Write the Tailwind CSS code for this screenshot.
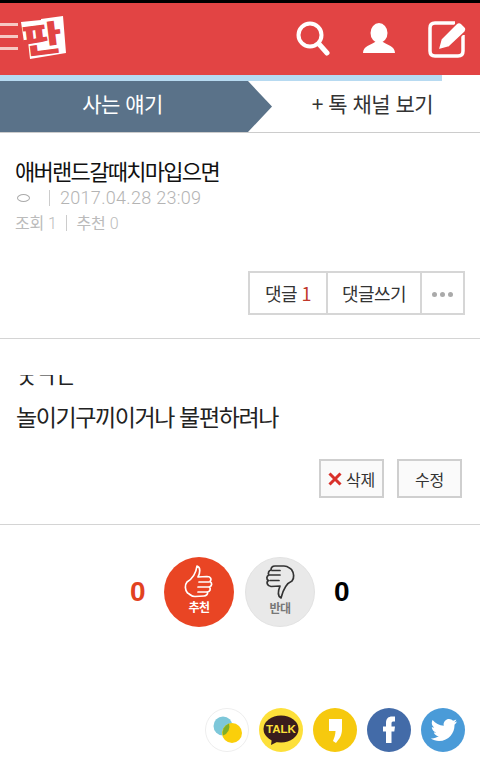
<!DOCTYPE html>
<html lang="ko"><head><meta charset="utf-8">
<script src="https://cdn.jsdelivr.net/npm/@tailwindcss/browser@4"></script>
</head>
<body class="bg-white font-['Noto_Sans_CJK_KR','Noto_Sans',sans-serif]">
<div class="w-[480px] h-[765px] overflow-hidden flex flex-col">
  <div class="h-[3px] bg-black"></div>
  <header class="h-[72px] bg-[#e24444] flex items-center relative">
    <div class="w-[18px] flex flex-col gap-[9px] -mt-[5px]">
      <div class="h-[3px] bg-[#f6c9c4]"></div><div class="h-[3px] bg-[#f6c9c4]"></div><div class="h-[3px] bg-[#f6c9c4]"></div>
    </div>
    <svg class="w-[48px] h-[48px] -mt-[1px]" viewBox="0 0 48 48">
      <polygon points="3,7 23,5 23,22 6,27" fill="#fff"/>
      <polygon points="23,4 45,1 48,38 12,44 10,26 23,22" fill="#fff"/>
      <text x="4" y="37" font-size="35" font-weight="900" fill="#e24444" font-family="Noto Sans CJK KR" transform="rotate(-7 24 24)" textLength="40" lengthAdjust="spacingAndGlyphs">판</text>
    </svg>
    <div class="ml-auto flex items-center gap-[32px] pr-[14px]">
      <svg class="w-[34px] h-[36px]" viewBox="0 0 34 36"><circle cx="14" cy="14" r="11.5" fill="none" stroke="#fff" stroke-width="4"/><path d="M23 23 L31 32" stroke="#fff" stroke-width="5" stroke-linecap="round"/></svg>
      <svg class="w-[34px] h-[34px]" viewBox="0 0 34 34"><ellipse cx="17" cy="11" rx="8.5" ry="10" fill="#fff"/><path d="M1 31 C1 24 9 23 13 20 H21 C25 23 33 24 33 31 Z" fill="#fff"/></svg>
      <svg class="w-[38px] h-[38px]" viewBox="0 0 38 38"><path d="M27 3 H7 Q2 3 2 8 V31 Q2 36 7 36 H30 Q35 36 35 31 V15" fill="none" stroke="#fff" stroke-width="3.5"/><path d="M13 19 L28 4 Q31 1 34 4 L37 7 Q39 9 37 12 L21 27 L10 30 Z" fill="#fff" stroke="#e24444" stroke-width="1.5"/></svg>
    </div>
  </header>
  <div class="h-[6px] w-[442px] bg-[#b7daf1]"></div>
  <nav class="h-[51px] flex">
    <div class="w-[272px] h-full bg-[#5a7289] [clip-path:polygon(0_0,248px_0,272px_50%,248px_100%,0_100%)] flex items-center justify-center pr-[27px] pb-[6px] text-white text-[21px] tracking-[-0.5px]">사는 얘기</div>
    <div class="flex-1 flex items-center justify-center text-[#333] text-[21px] tracking-[-0.5px] pr-[7px] pb-[6px]">+ 톡 채널 보기</div>
  </nav>
  <div class="h-px bg-[#ccc]"></div>

  <section class="h-[206px] flex flex-col border-b border-[#d4d4d4] px-[15px]">
    <h1 class="mt-[20px] text-[22px] leading-[34px] font-normal tracking-[-1.7px] text-[#111]">애버랜드갈때치마입으면</h1>
    <div class="flex items-center text-[18px] leading-[24px] text-[#b4b4b4] -mt-[1px]">
      <span class="w-[13px] h-[8px] ml-[2px] rounded-[50%] border border-[#aaa]"></span>
      <span class="w-px h-[16px] bg-[#ccc] ml-[19px] mr-[10px]"></span>
      <span class="font-['Roboto'] font-light tracking-[0.3px]">2017.04.28 23:09</span>
    </div>
    <div class="flex items-center text-[16px] leading-[24px] text-[#bbb] tracking-[-0.3px]">
      <span>조회 <span class="font-['Roboto'] font-light">1</span></span><span class="w-px h-[16px] bg-[#ccc] ml-[9px] mr-[10px]"></span><span>추천 <span class="font-['Roboto'] font-light">0</span></span>
    </div>
    <div class="mt-auto mb-[23px] self-end flex h-[44px] border-2 border-[#d6d6d6] text-[#333] text-[18px] tracking-[-0.5px] w-[217px]">
      <div class="w-[78px] flex items-center justify-center border-r-2 border-[#d6d6d6]">댓글&nbsp;<span class="text-[#c0392b]">1</span></div>
      <div class="w-[94px] flex items-center justify-center border-r-2 border-[#d6d6d6]">댓글쓰기</div>
      <div class="flex-1 flex items-center justify-center gap-[3px] pt-[2px]">
        <span class="w-[5px] h-[5px] rounded-full bg-[#aaa]"></span><span class="w-[5px] h-[5px] rounded-full bg-[#aaa]"></span><span class="w-[5px] h-[5px] rounded-full bg-[#aaa]"></span>
      </div>
    </div>
  </section>

  <section class="h-[186px] flex flex-col border-b border-[#d4d4d4] px-[16px] text-[#222]">
    <div class="mt-[36px] h-[12px] overflow-hidden relative">
      <span class="absolute left-0 bottom-[-7px] text-[23px] leading-[32px] tracking-[-1.4px] whitespace-nowrap">ㅈㄱㄴ</span>
    </div>
    <p class="mt-[13px] text-[23px] leading-[32px] tracking-[-1.4px] whitespace-nowrap">놀이기구끼이거나 불편하려나</p>
    <div class="mt-auto mb-[26px] mr-[2px] self-end flex gap-[13px] text-[16px] tracking-[-0.3px] text-[#333]">
      <div class="w-[65px] h-[39px] border-2 border-[#cfcfcf] bg-[#fafafa] flex items-center justify-center gap-[4px]">
        <svg class="w-[14px] h-[14px]" viewBox="0 0 14 14"><path d="M1.5 1.5 L12.5 12.5 M12.5 1.5 L1.5 12.5" stroke="#d9302a" stroke-width="3"/></svg>삭제
      </div>
      <div class="w-[65px] h-[39px] border-2 border-[#cfcfcf] bg-[#fafafa] flex items-center justify-center">수정</div>
    </div>
  </section>

  <section class="h-[136px] flex items-start pt-[32px]">
    <span class="ml-[130px] w-[16px] h-[70px] flex items-center font-['Liberation_Sans'] font-bold text-[28px] text-[#e2421f]">0</span>
    <div class="ml-[18px] w-[70px] h-[70px] rounded-full bg-[#e94524] flex flex-col items-center pt-[8px]">
      <svg class="w-[30px] h-[34px]" viewBox="0 0 30 34" fill="none" stroke="#fff" stroke-width="1.7" stroke-linejoin="round" stroke-linecap="round"><path d="M13 1 C17 2 16 8 14 12 L23 11.5 C27 11.5 28 15 26 16.5 C28.5 18 28 21 25.5 22 C27 24 26 26.5 23.5 27 C24 29.5 22 31 20 31 L11 31.5 C7 31.5 6 29 3.5 28 C1 25 0.5 20 3 17 C8 14 12 8 13 1 Z"/><path d="M15 17 H25 M14 22 H25 M14 27 H23"/></svg>
      <span class="text-white text-[12px] font-bold leading-[16px] tracking-[-0.5px]">추천</span>
    </div>
    <div class="ml-[11px] w-[70px] h-[70px] rounded-full bg-[#e9e9e9] border border-[#e2e2e2] flex flex-col items-center pt-[6px]">
      <svg class="w-[30px] h-[36px]" viewBox="0 0 30 36" fill="none" stroke="#333" stroke-width="1.7" stroke-linejoin="round" stroke-linecap="round"><path d="M16 34 C12 32 13 27 15 22 L6 22.5 C2 22 1 18 3.5 16.5 C1 15 1.5 12 4 11 C2.5 9 4 6.5 6 6 C6 3 8 2 10 2 L19 2 C23 2 24 4 26.5 5.5 C29 9 29.5 14 27 17 C22 19 18 26 16 34 Z"/><path d="M5 11 H15 M5 16.500 H14 M7 6.500 H15"/></svg>
      <span class="text-[#777] text-[12px] font-bold leading-[16px] tracking-[-0.5px]">반대</span>
    </div>
    <span class="ml-[19px] h-[70px] flex items-center font-['Liberation_Sans'] font-bold text-[28px] text-black">0</span>
  </section>

  <footer class="flex justify-end gap-[10px] pr-[15px] pt-[47px]">
    <svg class="w-[44px] h-[44px]" viewBox="0 0 44 44"><circle cx="22" cy="22" r="21.5" fill="#fff" stroke="#eee"/><circle cx="18" cy="18" r="9.500" fill="#7dc7d9"/><circle cx="27" cy="25" r="10" fill="#fbcf0a"/><path d="M24 15.500 A9.500 9.500 0 0 1 18 27.500 A10 10 0 0 1 24 15.500 Z" fill="#7fae2a"/></svg>
    <svg class="w-[44px] h-[44px]" viewBox="0 0 44 44"><circle cx="22" cy="22" r="22" fill="#fde03a"/><ellipse cx="22" cy="21" rx="17.500" ry="13.500" fill="#3a1d1d"/><path d="M13 30 L12 37 L20 33 Z" fill="#3a1d1d"/><text x="22" y="25" text-anchor="middle" font-family="Liberation Sans" font-weight="700" font-size="11.500" fill="#fde03a">TALK</text></svg>
    <svg class="w-[44px] h-[44px]" viewBox="0 0 44 44"><circle cx="22" cy="22" r="22" fill="#f6c90e"/><path d="M16 11 H29 V21 C29 28 26 31 23 35 L20 33 C21 30 22.500 27 22.500 23 H16 Z" fill="#fff"/></svg>
    <svg class="w-[44px] h-[44px]" viewBox="0 0 44 44"><circle cx="22" cy="22" r="22" fill="#436ba8"/><path d="M19 35 V23.500 H16 V18.500 H19 V15 C19 10.500 21.500 8.500 25 8.500 H28 V13.500 H26 C25 13.500 24.500 14.200 24.500 15.500 V18.500 H28 L27.300 23.500 H24.500 V35 Z" fill="#fff"/></svg>
    <svg class="w-[44px] h-[44px]" viewBox="0 0 44 44"><circle cx="22" cy="22" r="22" fill="#4a9bd8"/><path d="M36 13.500 C35 14 34 14.300 33 14.500 C34 13.800 35 12.700 35.300 11.500 C34.300 12 33 12.600 32 12.800 C31 11.700 29.600 11 28 11 C25 11 22.600 13.500 22.600 16.500 C22.600 17 22.700 17.300 22.800 17.700 C18.300 17.500 14.300 15.300 11.600 12 C10 15 11 18 13.200 19.500 C12.300 19.500 11.500 19.200 10.800 18.900 C10.800 21.500 12.700 23.800 15.200 24.300 C14.400 24.500 13.600 24.500 12.800 24.400 C13.500 26.500 15.500 28 17.800 28.100 C15.500 30 12.500 30.800 9.800 30.500 C12.200 32 15 33 18 33 C28 33 33.500 24.700 33.500 17.500 V16.800 C34.500 16 35.400 14.900 36 13.500 Z" fill="#fff"/></svg>
  </footer>
</div>
</body></html>
